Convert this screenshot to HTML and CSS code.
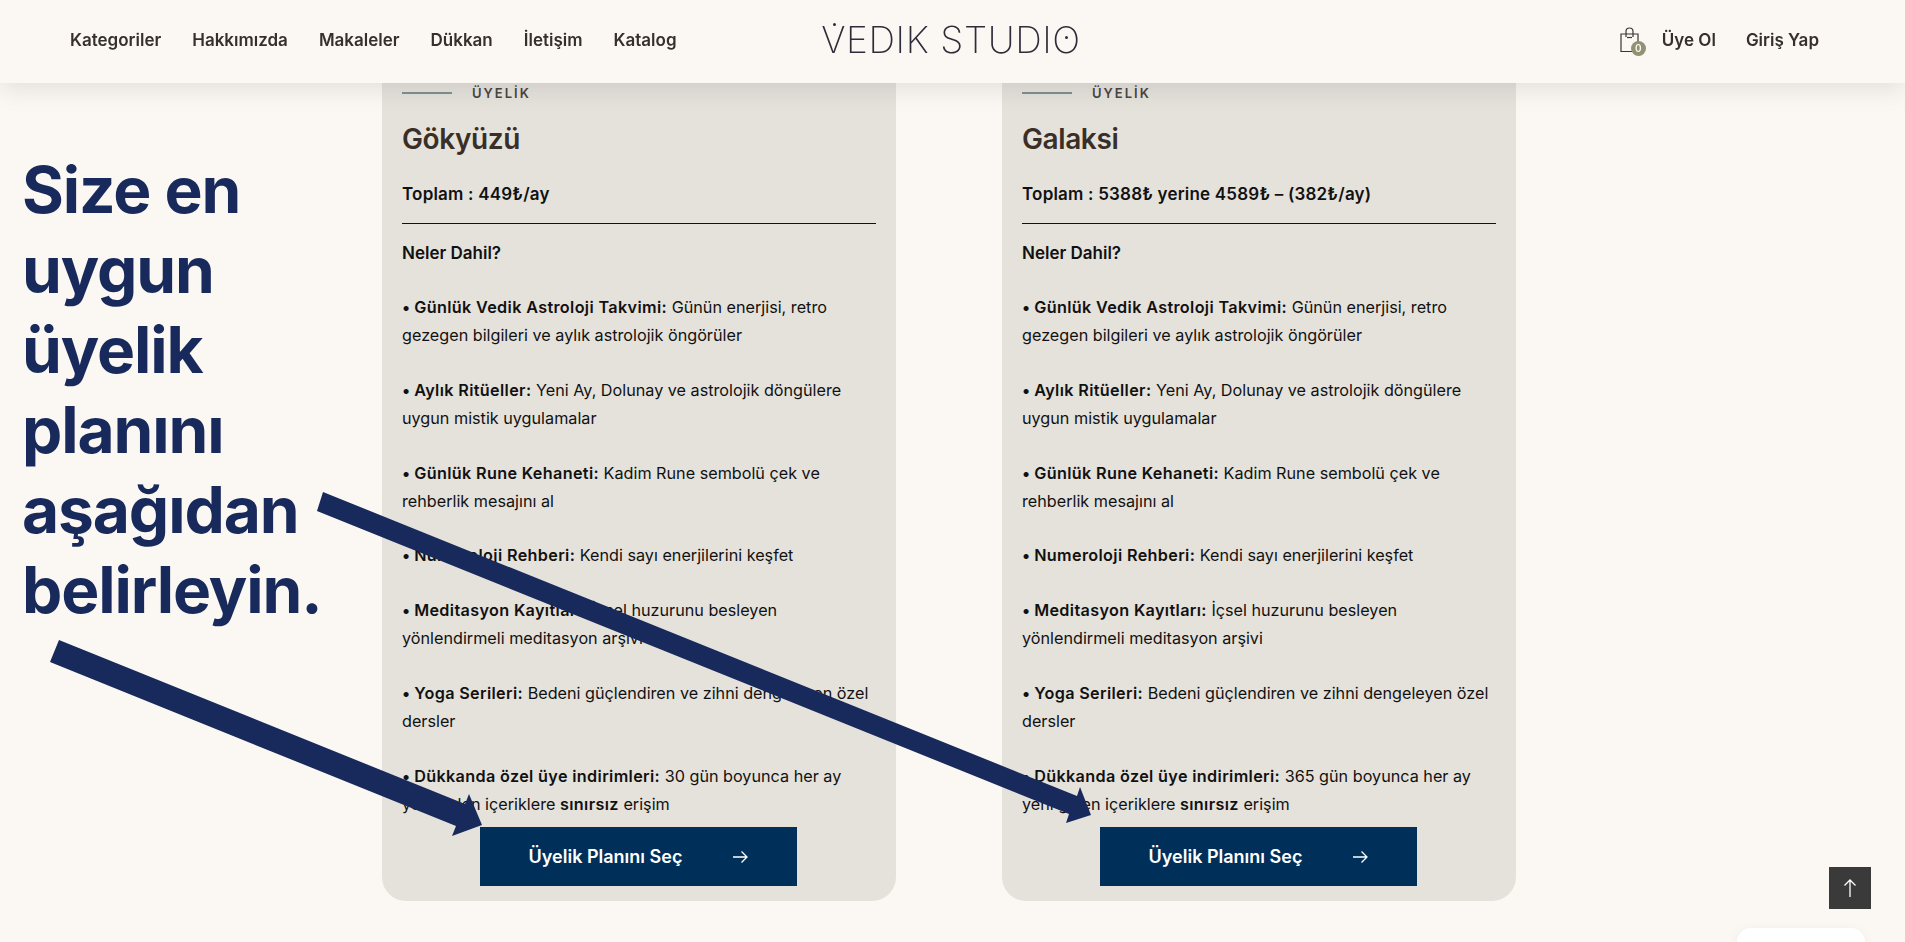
FILE: index.html
```html
<!DOCTYPE html>
<html lang="tr">
<head>
  <meta charset="UTF-8" />
  <title>Vedik Studio - Üyelik</title>
  <link rel="stylesheet" href="styles.css">
</head>
<body>
  <header class="topbar">
    <nav class="nav">
      <a>Kategoriler</a>
      <a>Hakkımızda</a>
      <a>Makaleler</a>
      <a>Dükkan</a>
      <a>İletişim</a>
      <a>Katalog</a>
    </nav>
    <div class="logo"><span class="logo-v">V</span>EDIK STUDI<span class="logo-o">O</span></div>
    <div class="account">
      <div class="cart">
        <svg width="20" height="26" viewBox="0 0 20 26" fill="none" stroke="#3a352f" stroke-width="1.2">
          <path d="M1 7h17v17.500h-17z" />
          <path d="M6 10V4.500a3.500 3.500 0 0 1 7 0V10" />
          <path d="M7 10.500h5" />
        </svg>
        <span class="cart-badge">0</span>
      </div>
      <a>Üye Ol</a>
      <a>Giriş Yap</a>
    </div>
  </header>

  <main class="page">
    <h1 class="hero">Size en uygun üyelik planını aşağıdan belirleyin.</h1>

    <section class="card">
      <div class="eyebrow"><span class="eyebrow-line"></span>ÜYELİK</div>
      <h2>Gökyüzü</h2>
      <div class="total">Toplam : 449₺/ay</div>
      <hr>
      <div class="included">Neler Dahil?</div>
      <p><b>Günlük Vedik Astroloji Takvimi:</b> Günün enerjisi, retro gezegen bilgileri ve aylık astrolojik öngörüler</p>
      <p><b>Aylık Ritüeller:</b> Yeni Ay, Dolunay ve astrolojik döngülere uygun mistik uygulamalar</p>
      <p><b>Günlük Rune Kehaneti:</b> Kadim Rune sembolü çek ve rehberlik mesajını al</p>
      <p><b>Numeroloji Rehberi:</b> Kendi sayı enerjilerini keşfet</p>
      <p><b>Meditasyon Kayıtları:</b> İçsel huzurunu besleyen yönlendirmeli meditasyon arşivi</p>
      <p><b>Yoga Serileri:</b> Bedeni güçlendiren ve zihni dengeleyen özel dersler</p>
      <p><b>Dükkanda özel üye indirimleri:</b> 30 gün boyunca her ay yeni gelen içeriklere <b>sınırsız</b> erişim</p>
      <button class="choose">Üyelik Planını Seç
        <svg width="16" height="14" viewBox="0 0 16 14" fill="none" stroke="#fff" stroke-width="1.3"><path d="M1 7h14M9.500 1.500 15 7l-5.500 5.500" /></svg>
      </button>
    </section>

    <section class="card">
      <div class="eyebrow"><span class="eyebrow-line"></span>ÜYELİK</div>
      <h2>Galaksi</h2>
      <div class="total">Toplam : 5388₺ yerine 4589₺ – (382₺/ay)</div>
      <hr>
      <div class="included">Neler Dahil?</div>
      <p><b>Günlük Vedik Astroloji Takvimi:</b> Günün enerjisi, retro gezegen bilgileri ve aylık astrolojik öngörüler</p>
      <p><b>Aylık Ritüeller:</b> Yeni Ay, Dolunay ve astrolojik döngülere uygun mistik uygulamalar</p>
      <p><b>Günlük Rune Kehaneti:</b> Kadim Rune sembolü çek ve rehberlik mesajını al</p>
      <p><b>Numeroloji Rehberi:</b> Kendi sayı enerjilerini keşfet</p>
      <p><b>Meditasyon Kayıtları:</b> İçsel huzurunu besleyen yönlendirmeli meditasyon arşivi</p>
      <p><b>Yoga Serileri:</b> Bedeni güçlendiren ve zihni dengeleyen özel dersler</p>
      <p><b>Dükkanda özel üye indirimleri:</b> 365 gün boyunca her ay yeni gelen içeriklere <b>sınırsız</b> erişim</p>
      <button class="choose">Üyelik Planını Seç
        <svg width="16" height="14" viewBox="0 0 16 14" fill="none" stroke="#fff" stroke-width="1.3"><path d="M1 7h14M9.500 1.500 15 7l-5.500 5.500" /></svg>
      </button>
    </section>
  </main>

  <!-- arrows drawn over the cards -->
  <svg class="arrows" viewBox="0 0 1905 942">
    <polygon points="59,640 465,804 469,794 482,825 452,836 456,826 50,662" />
    <polygon points="323,492 1077,796 1080,787 1091,815 1066,823 1069,814 317,511" />
  </svg>

  <button class="to-top">
    <svg width="14" height="20" viewBox="0 0 14 20" fill="none" stroke="#fff" stroke-width="1.3"><path d="M7 19V2M1.500 7.500 7 2l5.500 5.500" /></svg>
  </button>
  <div class="chat-chip"></div>
</body>
</html>
```

FILE: styles.css
```css
html, body { height: 100%; }
body { margin: 0; overflow: hidden; background: #fbf8f3; color: #111; font-family: Inter, "Noto Sans", sans-serif; font-size: 16.2px; line-height: 28px; }

.topbar { position: fixed; top: 0; left: 0; right: 0; z-index: 5; height: 83px; padding: 0 86px 4px 70px; display: grid; grid-template-columns: 1fr auto 1fr; align-items: center; background: #fbf8f3; box-shadow: 0 6px 24px rgba(0, 0, 0, 0.1); box-sizing: border-box; color: #35302b; font-size: 17px; font-weight: 600; }
.nav { display: flex; gap: 31px; }
.logo { position: relative; margin-left: 13px; font-size: 37px; line-height: 40px; font-weight: 200; letter-spacing: 0.6px; color: #2f2c3a; white-space: nowrap; }
.logo-v, .logo-o { position: relative; }
.logo-v::before { content: ""; position: absolute; left: 50%; top: 6px; width: 3px; height: 3px; margin-left: -1px; border-radius: 50%; background: #2f2c3a; }
.logo-o::before { content: ""; position: absolute; left: 50%; top: 19px; width: 3px; height: 3px; margin-left: -2px; border-radius: 50%; background: #2f2c3a; }
.account { display: flex; align-items: center; justify-content: flex-end; gap: 30px; }
.cart { position: relative; height: 26px; margin-right: -8px; }
.cart-badge { position: absolute; right: -6px; bottom: -3px; width: 15px; height: 15px; border-radius: 50%; background: #8f9273; color: #fbf8f3; font-size: 10px; line-height: 15px; text-align: center; }

.page { display: flex; align-items: flex-start; padding: 60px 0 0 22px; }
.hero { width: 360px; margin: 90px 0 0; font-size: 64px; line-height: 80px; font-weight: 700; letter-spacing: -1.1px; color: #18295b; }
.card { width: 474px; height: 806px; padding: 20px 20px 15px; margin-right: 106px; background: #e5e2dc; border-radius: 0 0 24px 24px; display: flex; flex-direction: column; }
.eyebrow { display: flex; align-items: center; gap: 20px; height: 26px; font-size: 13px; line-height: 26px; font-weight: 600; letter-spacing: 2px; color: #4a4640; }
.eyebrow-line { width: 50px; height: 2px; background: #7f9192; }
.card h2 { margin: 15px 0 0; font-size: 28px; line-height: 36px; font-weight: 600; letter-spacing: -0.4px; color: #3a2f28; }
.total { margin-top: 23px; font-size: 17px; font-weight: 600; letter-spacing: 0.2px; }
.card hr { width: 100%; height: 1px; margin: 15px 0 15px; border: 0; background: #111; }
.included { margin-bottom: 26px; font-size: 17px; font-weight: 600; }
.card p { margin: 0 0 26.8px; }
.card p::before { content: "•"; margin-right: 4px; font-weight: 600; }
.card b { font-weight: 600; letter-spacing: 0.35px; }
.card p:last-of-type { margin-bottom: 0; }
.choose { flex: none; width: 317px; height: 59px; margin: auto 0 0 78px; display: flex; align-items: center; justify-content: center; gap: 50px; border: 0; background: #00305a; color: #fff; font-family: inherit; font-size: 18px; font-weight: 600; }

.arrows { position: absolute; top: 0; left: 0; width: 1905px; height: 942px; pointer-events: none; }
.arrows polygon { fill: #18295b; }
.to-top { position: fixed; left: 1829px; top: 867px; width: 42px; height: 42px; padding: 0; border: 0; background: #3a3a3a; display: flex; align-items: center; justify-content: center; }
.chat-chip { position: fixed; left: 1737px; top: 928px; width: 128px; height: 40px; border-radius: 14px; background: #fff; box-shadow: 0 2px 12px rgba(0, 0, 0, 0.05); }
```
